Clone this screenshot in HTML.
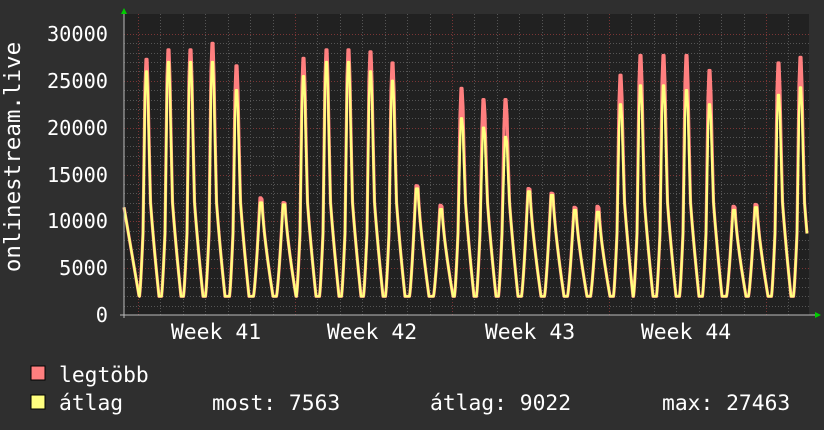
<!DOCTYPE html>
<html><head><meta charset="utf-8"><style>
html,body{margin:0;padding:0;background:#2f2f2f;width:824px;height:430px;overflow:hidden}
text{font-family:"DejaVu Sans Mono","Liberation Mono",monospace;fill:#fff}
</style></head><body>
<svg id="g" width="824" height="430" xmlns="http://www.w3.org/2000/svg">
<rect x="124" y="14" width="685" height="301" fill="#212121"/>
<g id="grid"></g>
<g id="data"></g>
<line x1="120" y1="315" x2="815" y2="315" fill="none" stroke="#bbb" stroke-width="1"/>
<line x1="124" y1="14" x2="124" y2="318" stroke="#bbb" stroke-width="1"/>
<polygon points="121,14 127,14 124,8" fill="#0c0"/>
<polygon points="815,312 815,318 821,315" fill="#0c0"/>
<g font-size="20.3" text-anchor="end">
<text x="108" y="41">30000</text><text x="108" y="88">25000</text><text x="108" y="135">20000</text>
<text x="108" y="182">15000</text><text x="108" y="228">10000</text><text x="108" y="275">5000</text>
<text x="108" y="322">0</text></g>
<g font-size="21.4" text-anchor="middle">
<text x="216" y="339">Week 41</text><text x="372" y="339">Week 42</text>
<text x="530" y="339">Week 43</text><text x="686" y="339">Week 44</text></g>
<text font-size="22.5" transform="translate(20,157) rotate(-90)" text-anchor="middle">onlinestream.live</text>
<rect x="31" y="366" width="14" height="14" fill="#ff7f7f" stroke="#000" stroke-width="1"/>
<rect x="31" y="395" width="14" height="14" fill="#ffff7f" stroke="#000" stroke-width="1"/>
<g font-size="21.3"><text x="59" y="382">legtöbb</text><text x="59" y="410">átlag</text>
<text x="212" y="410">most: 7563</text><text x="430" y="410">átlag: 9022</text><text x="662" y="410">max: 27463</text></g>
</svg>
<script>
var NS="http://www.w3.org/2000/svg",grid=document.getElementById('grid'),data=document.getElementById('data');
function ln(x1,y1,x2,y2,c){var l=document.createElementNS(NS,'line');l.setAttribute('x1',x1);l.setAttribute('y1',y1);l.setAttribute('x2',x2);l.setAttribute('y2',y2);l.setAttribute('stroke',c);l.setAttribute('stroke-dasharray','1,2');l.setAttribute('stroke-width','1');grid.appendChild(l);}
function Y(v){return 315-v*281/30000;}
for(var v=1000;v<=30000;v+=1000){var y=Math.round(Y(v))+0.5;ln(124,y,809,y,v%5000?'#555':'#7a3535');}
for(var d=-1;d<31;d++){var xx=Math.round(138+d*22.43)+0.5;if(xx>124&&xx<809)ln(xx,14,xx,315,d%7==0?'#7a3535':'#555');}
var px=[146,168,190,212,236,260,283,303,326,348,370,392,416,440,461,483,505,528,551,574,597,620,640,663,686,709,733,755,778,800];
var rp=[27300,28300,28300,29000,26600,12500,12000,27400,28300,28300,28100,26900,13800,11700,24200,23000,23000,13500,13000,11500,11600,25600,27700,27700,27700,26100,11600,11800,26900,27500];
var yp=[26000,27000,27000,27000,24000,12000,11800,25500,27000,27000,26000,25000,13500,11300,21000,20000,19000,13200,12800,11200,11000,22500,24500,24500,24000,22500,11200,11500,23500,24300];
function base(dx){if(dx<-6.5||dx>13)return 0;if(dx<0){var t=(dx+6.5)/6.5;return Math.pow(t,1.3);}if(dx<2)return 1;var t=(dx-2)/11;return 1-Math.pow(t,0.75);}
function spike(dx){if(dx<-3||dx>4.5)return 0;if(dx>=-1&&dx<=1)return 1;return dx<0?(dx+3)/2:1-(dx-1)/3.5;}
function val(x,red){var best=2000;for(var i=0;i<px.length;i++){var dx=x-px[i];if(dx<-8||dx>16)continue;
 var P=yp[i];var A=Math.min(P-2000,15000);var v=2000+A*base(dx)+(P-2000-A)*spike(dx);
 if(red)v+=(rp[i]-yp[i])*spike(dx);
 best=Math.max(best,v);}
 if(x<140){best=Math.max(best,11500-(x-124)*630);}return best;}
function path(red,c,w){var d='';for(var x=124;x<=807;x+=0.5){d+=(x==124?'M':'L')+x+','+Y(val(x,red)).toFixed(1);}
var p=document.createElementNS(NS,'path');p.setAttribute('d',d);p.setAttribute('fill','none');p.setAttribute('stroke',c);p.setAttribute('stroke-width',w);p.setAttribute('stroke-linejoin','round');data.appendChild(p);}
path(true,'#ff7f7f',3.2);path(false,'#ffff7f',2.4);
</script>
</body></html>
